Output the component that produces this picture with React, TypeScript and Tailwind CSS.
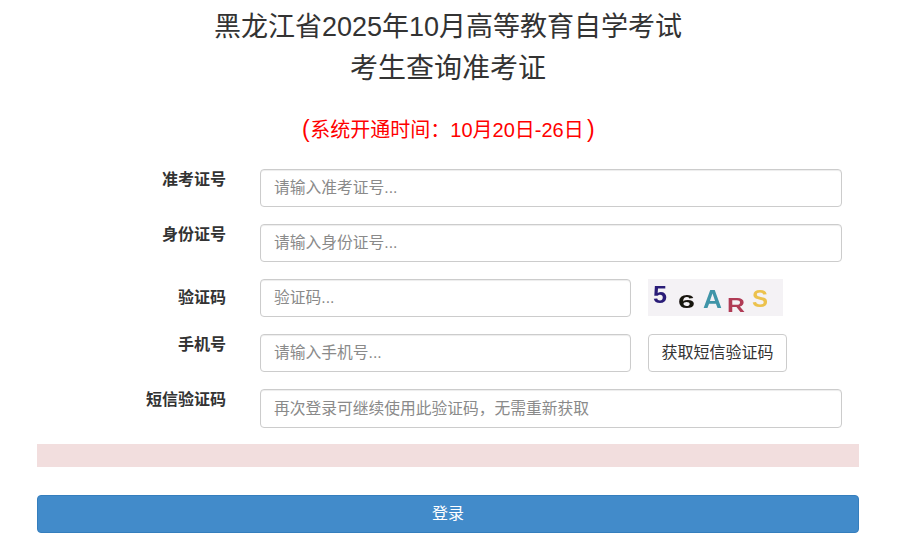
import React from 'react';

const fontStack = "font-['Liberation_Sans','Noto_Sans_CJK_SC',sans-serif]";

const inputCls = "h-[38px] rounded border border-[#ccc] bg-white px-[13px] text-[15.75px] text-[#555] placeholder:text-[#8a8a8a] shadow-[inset_0_1px_1px_rgba(0,0,0,0.075)] outline-none";

const Captcha: React.FC = () => (
    <svg width="135" height="37" viewBox="0 0 135 37" className="block bg-[#f4f2f5]">
        <defs>
            <filter id="soft"><feGaussianBlur stdDeviation="0.6" /></filter>
        </defs>
        <g filter="url(#soft)" fontFamily="Liberation Sans, sans-serif" fontWeight="700">
            <text x="5" y="24" fontSize="23" fill="#2a1f78" textLength="14" lengthAdjust="spacingAndGlyphs">5</text>
            <text x="30" y="29" fontSize="19" fill="#17130f" textLength="17" lengthAdjust="spacingAndGlyphs">6</text>
            <text x="55" y="29" fontSize="25" fill="#3f95a8" textLength="19" lengthAdjust="spacingAndGlyphs">A</text>
            <text x="79" y="33" fontSize="20" fill="#b03a55" textLength="18" lengthAdjust="spacingAndGlyphs">R</text>
            <text x="104" y="28" fontSize="23" fill="#ecc24e" textLength="16" lengthAdjust="spacingAndGlyphs">S</text>
        </g>
    </svg>
);

const Row: React.FC<{ label: string; labelTop?: string; children: React.ReactNode }> = ({ label, labelTop = 'pt-[1px]', children }) => (
    <div className="flex h-[38px] mb-[17px]">
        <label className={`w-[189px] shrink-0 text-right text-[16px] leading-[20px] font-bold text-[#333] ${labelTop}`}>{label}</label>
        <div className="ml-[34px] flex flex-1 mr-[17px]">{children}</div>
    </div>
);

const App: React.FC = () => {
    return (
        <div className={`min-h-[548px] w-[908px] overflow-hidden bg-white px-[37px] pt-[7px] text-[#333] ${fontStack}`}>
            <div className="w-[822px]">
                <h1 className="text-center leading-[41px] font-normal text-[#333]">
                    <span className="block text-[27px]">黑龙江省2025年10月高等教育自学考试</span>
                    <span className="block text-[28px]">考生查询准考证</span>
                </h1>
                <p className="mt-[27px] mb-[25px] text-center text-[20px] leading-[28px] text-[#f00]">
                    <span className="inline-block w-[9px] text-[23px] leading-[24px]">(</span>系统开通时间：10月20日-26日<span className="inline-block w-[11px] text-right text-[23px] leading-[24px]">)</span>
                </p>

                <form>
                    <Row label="准考证号">
                        <input className={`${inputCls} w-full`} placeholder="请输入准考证号..." />
                    </Row>
                    <Row label="身份证号">
                        <input className={`${inputCls} w-full`} placeholder="请输入身份证号..." />
                    </Row>
                    <Row label="验证码" labelTop="pt-[9px]">
                        <input className={`${inputCls} w-[371px] shrink-0`} placeholder="验证码..." />
                        <div className="ml-[17px]"><Captcha /></div>
                    </Row>
                    <Row label="手机号">
                        <input className={`${inputCls} w-[371px] shrink-0`} placeholder="请输入手机号..." />
                        <button type="button" className="ml-[17px] h-[38px] w-[139px] shrink-0 whitespace-nowrap rounded border border-[#ccc] bg-white text-[16px] text-[#333]">获取短信验证码</button>
                    </Row>
                    <Row label="短信验证码">
                        <input className={`${inputCls} w-full !h-[39px]`} placeholder="再次登录可继续使用此验证码，无需重新获取" />
                    </Row>
                </form>

                <div className="h-[23px] bg-[#f2dede]" />
                <button type="button" className="mt-[28px] h-[38px] w-full rounded border border-[#357ebd] bg-[#428bca] text-[16px] text-white">登录</button>
            </div>
        </div>
    );
};

export default App;
